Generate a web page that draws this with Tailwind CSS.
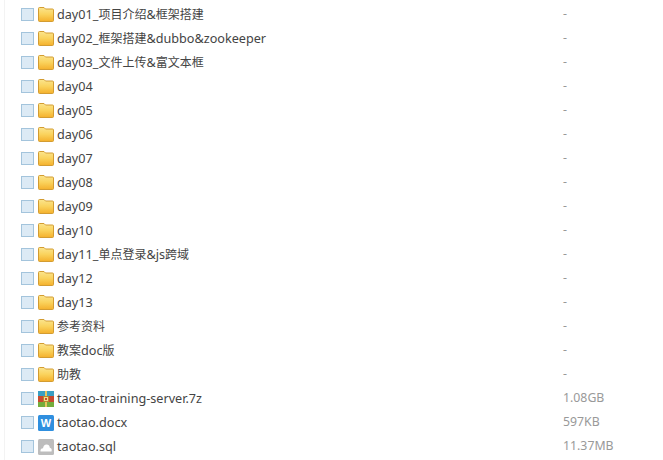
<!DOCTYPE html>
<html lang="en">
<head>
  <meta charset="UTF-8">
  <title>Files</title>
  <script src="https://cdn.jsdelivr.net/npm/@tailwindcss/browser@4"></script>
</head>
<body class="bg-white overflow-hidden font-['Noto_Sans','Noto_Sans_CJK_SC',sans-serif] text-[12.65px]">
  <svg class="absolute w-0 h-0">
    <defs>
      <linearGradient id="folderFill" x1="0" y1="0" x2="0" y2="1">
        <stop offset="0" stop-color="#fbe58e"/>
        <stop offset="0.5" stop-color="#fad25c"/>
        <stop offset="1" stop-color="#f4b02c"/>
      </linearGradient>
    </defs>
  </svg>
  <div id="list" class="ml-[4px] pt-[2px] pl-[16px] pr-[20px] h-[460px] border-l border-[#f3f3f3]"></div>

  <script>
    const folder = `<svg width="16" height="15" viewBox="0 0 16 15"><path d="M.5 1.500Q.5 .5 1.500 .5H6L7.500 2H14.500Q15.500 2 15.500 3V13.500Q15.500 14.500 14.500 14.500H1.500Q.5 14.500 .5 13.500Z" fill="url(#folderFill)" stroke="#d39c32"/></svg>`;

    const archive = `<svg width="16" height="16" viewBox="0 0 16 16">
      <rect width="16" height="5" fill="#3a9fc4"/>
      <rect y="5" width="16" height="6" fill="#c9492f"/>
      <rect y="11" width="16" height="5" fill="#74ad3c"/>
      <rect x="7" width="2" height="16" fill="#e8c860"/>
      <rect x="5.500" y="5.500" width="5" height="5" fill="#f3dc8e" stroke="#b8862e"/>
      <rect x="7" y="7" width="2" height="2" fill="#c9492f"/>
    </svg>`;

    const word = `<svg width="16" height="16" viewBox="0 0 16 16">
      <rect width="16" height="16" rx="1.500" fill="#2f8fdf"/>
      <text x="8" y="12" text-anchor="middle" fill="#fff" font-family="Liberation Sans" font-weight="700" font-size="11">W</text>
    </svg>`;

    const sql = `<svg width="16" height="16" viewBox="0 0 16 16">
      <rect width="16" height="16" rx="1.500" fill="#bdbdbd"/>
      <path d="M2.500 12.500Q2 9.500 5 9.300Q5.500 5.500 8.500 5.500Q11.500 5.500 11.800 8.800Q14.500 9.500 13.500 12.500Z" fill="#fff"/>
    </svg>`;

    const rows = [
      ["day01_<b>项目介绍</b>&amp;<b>框架搭建</b>", "-", folder],
      ["day02_<b>框架搭建</b>&amp;dubbo&amp;zookeeper", "-", folder],
      ["day03_<b>文件上传</b>&amp;<b>富文本框</b>", "-", folder],
      ["day04", "-", folder],
      ["day05", "-", folder],
      ["day06", "-", folder],
      ["day07", "-", folder],
      ["day08", "-", folder],
      ["day09", "-", folder],
      ["day10", "-", folder],
      ["day11_<b>单点登录</b>&amp;js<b>跨域</b>", "-", folder],
      ["day12", "-", folder],
      ["day13", "-", folder],
      ["<b>参考资料</b>", "-", folder],
      ["<b>教案</b>doc<b>版</b>", "-", folder],
      ["<b>助教</b>", "-", folder],
      ["taotao-training-server.7z", "1.08GB", archive],
      ["taotao.docx", "597KB", word],
      ["taotao.sql", "11.37MB", sql]
    ];

    const list = document.getElementById("list");
    rows.forEach(([name, size, icon]) => {
      const row = document.createElement("div");
      row.className = "flex items-center h-6";
      row.innerHTML = `
        <span class="w-[13px] h-[13px] mt-px border border-[#a3c4dc] bg-[#dceaf5] shrink-0"></span>
        <span class="ml-[4px] mt-px w-[16px] h-[16px] flex items-center justify-center shrink-0">${icon}</span>
        <span class="ml-[3px] w-[506px] text-[#444] whitespace-nowrap [&_b]:font-normal [&_b]:text-[12px]">${name}</span>
        <span class="text-[#999] text-[12.3px]">${size}</span>`;
      list.appendChild(row);
    });
  </script>
</body>
</html>
